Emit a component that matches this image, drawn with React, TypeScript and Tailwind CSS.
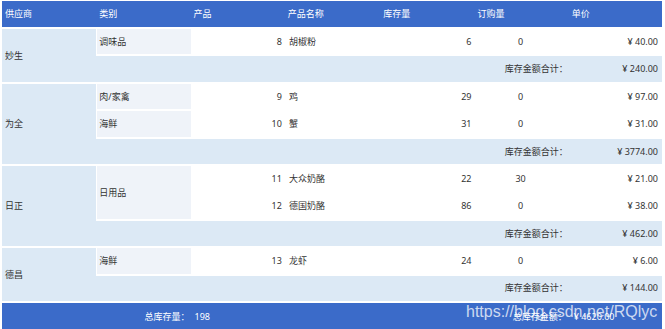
import React from "react";

interface Product {
  id: number;
  name: string;
  stock: number;
  order: number;
  price: string;
}

interface Category {
  name: string;
  products: Product[];
}

interface Supplier {
  name: string;
  categories: Category[];
  total: string;
}

const suppliers: Supplier[] = [
  {
    name: "妙生",
    total: "¥ 240.00",
    categories: [
      { name: "调味品", products: [{ id: 8, name: "胡椒粉", stock: 6, order: 0, price: "¥ 40.00" }] },
    ],
  },
  {
    name: "为全",
    total: "¥ 3774.00",
    categories: [
      { name: "肉/家禽", products: [{ id: 9, name: "鸡", stock: 29, order: 0, price: "¥ 97.00" }] },
      { name: "海鲜", products: [{ id: 10, name: "蟹", stock: 31, order: 0, price: "¥ 31.00" }] },
    ],
  },
  {
    name: "日正",
    total: "¥ 462.00",
    categories: [
      {
        name: "日用品",
        products: [
          { id: 11, name: "大众奶酪", stock: 22, order: 30, price: "¥ 21.00" },
          { id: 12, name: "德国奶酪", stock: 86, order: 0, price: "¥ 38.00" },
        ],
      },
    ],
  },
  {
    name: "德昌",
    total: "¥ 144.00",
    categories: [
      { name: "海鲜", products: [{ id: 13, name: "龙虾", stock: 24, order: 0, price: "¥ 6.00" }] },
    ],
  },
];

const headers = ["供应商", "类别", "产品", "产品名称", "库存量", "订购量", "单价"];

const font = "font-['Noto_Sans','Noto_Sans_CJK_SC',sans-serif]";

export default function App() {
  return (
    <div className={`w-[665px] h-[329px] overflow-hidden bg-white pt-[1px] pl-[2px] pr-[3px] text-[9px] text-[#333] ${font}`}>
      <div className="flex flex-col gap-[2px]">
        {/* header */}
        <div className="grid grid-cols-7 h-[26px] bg-[#3b6bc9] text-white items-center">
          {headers.map((h, i) => (
            <div key={h} className={i > 3 ? "pl-[4px]" : "pl-[3px]"}>
              {h}
            </div>
          ))}
        </div>

        {suppliers.map((s) => (
          <div key={s.name} className="flex">
            <div className="w-[94.3px] shrink-0 bg-[#dce9f5] flex items-center pl-[3px]">{s.name}</div>
            <div className="flex-1 flex flex-col gap-[2px]">
              {s.categories.map((c) => (
                <div key={c.name + s.name} className="flex">
                  <div className="w-[94.3px] shrink-0 bg-[#eff3f9] border-l border-white flex items-center pl-[2px]">
                    {c.name}
                  </div>
                  <div className="flex-1 flex flex-col gap-[2px]">
                    {c.products.map((p) => (
                      <div key={p.id} className="grid grid-cols-5 h-[25.4px] bg-white items-center">
                        <div className="text-right pr-[3px]">{p.id}</div>
                        <div className="pl-[4px]">{p.name}</div>
                        <div className="text-right pr-[2px]">{p.stock}</div>
                        <div className="text-center">{p.order}</div>
                        <div className="text-right pr-[4px]">{p.price}</div>
                      </div>
                    ))}
                  </div>
                </div>
              ))}
              <div className="grid grid-cols-6 h-[25.4px] bg-[#dce9f5] items-center">
                <div className="col-span-5 text-right">库存金额合计：</div>
                <div className="text-right pr-[4px]">{s.total}</div>
              </div>
            </div>
          </div>
        ))}

        {/* footer */}
        <div className="relative grid grid-cols-7 h-[28px] bg-[#3b6bc9] text-white items-center">
          <div className="col-span-2 text-right pr-[1px]">总库存量：</div>
          <div className="pl-[4px]">198</div>
          <div className="col-span-3 text-right pr-[1px]">总库存金额：</div>
          <div className="pl-[6px]">¥ 4620.00</div>
          <div className="absolute left-[464px] top-[-3px] text-[16px] text-white/75 font-['Liberation_Sans',sans-serif]">
            https://blog.csdn.net/RQlyc
          </div>
        </div>
      </div>
    </div>
  );
}
